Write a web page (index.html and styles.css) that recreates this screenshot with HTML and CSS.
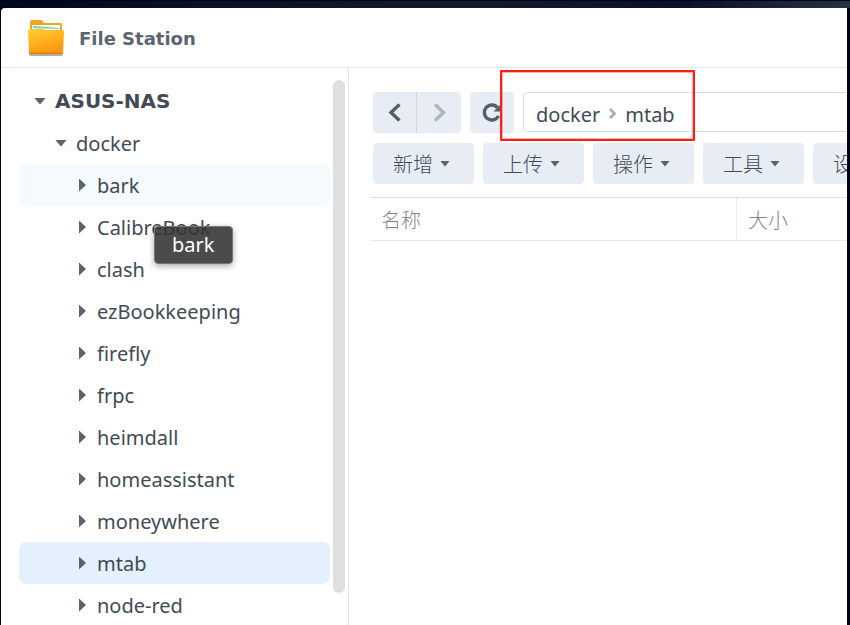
FILE: index.html
```html
<!DOCTYPE html>
<html lang="zh-CN">
<head>
    <meta charset="UTF-8">
    <meta name="viewport" content="width=device-width, initial-scale=1.0">
    <title>File Station</title>
    <link rel="stylesheet" href="styles.css">
</head>
<body>
    <div class="window">
        <header class="header">
            <svg class="logo" width="38" height="38" viewBox="0 0 38 38" aria-hidden="true">
                <defs>
                    <linearGradient id="front" x1="0" y1="0" x2="0.4" y2="1">
                        <stop offset="0" stop-color="#ffcf33"/>
                        <stop offset="1" stop-color="#ff980f"/>
                    </linearGradient>
                </defs>
                <rect x="2" y="32" width="34" height="5" rx="2" fill="#b5b0ad"/>
                <path d="M3 12V3q0-2 2-2h9q1 0 2 1l1 2h16q2 0 2 2v7z" fill="#f3a51c"/>
                <path d="M5 6h28v6H5z" fill="#fff"/>
                <path d="M6 7l26 2v3H6z" fill="#6fd3ac"/>
                <path d="M5 9l28 1v3H5z" fill="#f4fbf7"/>
                <path d="M1 12q0-2 2-2h13l3 1h16q2 0 2 2l-1 20q0 2-2 2H4q-2 0-2-2z" fill="url(#front)"/>
                <path d="M2 33q0 2 2 2h30q2 0 2-2l-1 .8H3z" fill="#d9780d"/>
            </svg>
            <h1>File Station</h1>
        </header>

        <div class="content">
            <aside class="sidebar">
                <ul class="tree">
                    <li><a class="node root" href="#"><span class="caret down"></span>ASUS-NAS</a></li>
                    <li><a class="node level-1" href="#"><span class="caret down"></span>docker</a></li>
                    <li><a class="node level-2 hover" href="#"><span class="caret right"></span>bark</a></li>
                    <li><a class="node level-2" href="#"><span class="caret right"></span>CalibreBook</a></li>
                    <li><a class="node level-2" href="#"><span class="caret right"></span>clash</a></li>
                    <li><a class="node level-2" href="#"><span class="caret right"></span>ezBookkeeping</a></li>
                    <li><a class="node level-2" href="#"><span class="caret right"></span>firefly</a></li>
                    <li><a class="node level-2" href="#"><span class="caret right"></span>frpc</a></li>
                    <li><a class="node level-2" href="#"><span class="caret right"></span>heimdall</a></li>
                    <li><a class="node level-2" href="#"><span class="caret right"></span>homeassistant</a></li>
                    <li><a class="node level-2" href="#"><span class="caret right"></span>moneywhere</a></li>
                    <li><a class="node level-2 selected" href="#"><span class="caret right"></span>mtab</a></li>
                    <li><a class="node level-2" href="#"><span class="caret right"></span>node-red</a></li>
                </ul>
                <div class="scrollbar"></div>
                <div class="tooltip" role="tooltip">bark</div>
            </aside>

            <main class="main">
                <div class="toolbar">
                    <div class="btn-group">
                        <button class="btn btn-icon" type="button" aria-label="后退">
                            <svg width="24" height="24" viewBox="0 0 24 24"><path d="M16.500 3.500L8 11.500l8.500 8" fill="none" stroke="#535f69" stroke-width="3.400"/></svg>
                        </button>
                        <button class="btn btn-icon" type="button" aria-label="前进" disabled>
                            <svg width="24" height="24" viewBox="0 0 24 24"><path d="M8 3.500l8.500 8-8.500 8" fill="none" stroke="#aeb5be" stroke-width="3.400"/></svg>
                        </button>
                    </div>
                    <button class="btn btn-icon" type="button" aria-label="刷新">
                        <svg width="24" height="24" viewBox="0 0 24 24">
                            <path d="M18.500 15a7.500 7.500 0 1 1-1-8.500" fill="none" stroke="#535f69" stroke-width="3.400"/>
                            <path d="M21 3v7.500h-7.500z" fill="#535f69"/>
                        </svg>
                    </button>
                    <nav class="path">
                        <a href="#">docker</a>
                        <svg width="9" height="12" viewBox="0 0 9 12" aria-hidden="true"><path d="M2 1l4.500 4.500L2 10" fill="none" stroke="#a3abb3" stroke-width="2.600"/></svg>
                        <a href="#">mtab</a>
                        <span class="highlight"></span>
                    </nav>
                </div>

                <div class="toolbar actions">
                    <button class="btn btn-menu" type="button">新增<span class="caret small"></span></button>
                    <button class="btn btn-menu" type="button">上传<span class="caret small"></span></button>
                    <button class="btn btn-menu" type="button">操作<span class="caret small"></span></button>
                    <button class="btn btn-menu" type="button">工具<span class="caret small"></span></button>
                    <button class="btn btn-menu" type="button">设置<span class="caret small"></span></button>
                </div>

                <table class="files">
                    <thead>
                        <tr>
                            <th class="col-name" scope="col">名称</th>
                            <th scope="col">大小</th>
                        </tr>
                    </thead>
                    <tbody></tbody>
                </table>
            </main>
        </div>
    </div>
</body>
</html>
```
FILE: styles.css
```css
* {
    margin: 0;
    padding: 0;
    box-sizing: border-box;
}

body {
    height: 100vh;
    padding: 8px 3px 0 1px;
    overflow: hidden;
    background: linear-gradient(90deg, #03071d 0%, #151a2b 55%, #0b1029 80%, #25323f 100%) 0 1px / 100% 7px no-repeat, #010417;
    font-family: "Noto Sans", "Noto Sans CJK SC", sans-serif;
    font-size: 20px;
    color: #414b55;
}

a {
    color: inherit;
    text-decoration: none;
}

.window {
    display: flex;
    flex-direction: column;
    height: 100%;
    overflow: hidden;
    background: #fff;
    border-top-left-radius: 4px;
}

.header {
    display: flex;
    flex-shrink: 0;
    align-items: center;
    gap: 14px;
    height: 60px;
    padding-left: 26px;
    border-bottom: 1px solid #e1e5e9;
}

.header h1 {
    padding-top: 2px;
    font-family: "DejaVu Sans", Verdana, sans-serif;
    font-size: 18px;
    color: #5b656f;
}

.content {
    display: flex;
    flex: 1;
    min-height: 0;
}

/* Sidebar tree */
.sidebar {
    position: relative;
    display: flex;
    flex-shrink: 0;
    gap: 3px;
    width: 348px;
    padding: 12px 3px 0 18px;
    overflow: hidden;
    border-right: 1px solid #dfe6ee;
}

.tree {
    flex: 1;
    list-style: none;
}

.node {
    display: flex;
    align-items: center;
    gap: 9px;
    height: 42px;
    border-radius: 7px;
}

.root {
    padding-left: 15px;
    font-family: "DejaVu Sans", Verdana, sans-serif;
    font-weight: bold;
}

.level-1 {
    padding-left: 36px;
}

.level-2 {
    gap: 12px;
    padding-left: 60px;
}

.hover,
.node:hover {
    background: #f5faff;
}

.selected {
    background: #e4f0fc;
}

.caret {
    flex-shrink: 0;
    background: #5a646e;
}

.caret.down {
    width: 12px;
    height: 7px;
    clip-path: polygon(0 0, 100% 0, 50% 100%);
}

.caret.right {
    width: 7px;
    height: 13px;
    margin-right: -1px;
    clip-path: polygon(0 0, 100% 50%, 0 100%);
}

.caret.small {
    width: 10px;
    height: 6px;
    clip-path: polygon(0 0, 100% 0, 50% 100%);
}

.scrollbar {
    width: 12px;
    height: 513px;
    background: #dfdfdf;
    border-radius: 6px;
}

.tooltip {
    position: absolute;
    top: 158px;
    left: 153px;
    padding: 0 18px 0 17px;
    line-height: 36px;
    color: #fff;
    background: rgba(50, 50, 50, 0.88);
    border: 1px solid #777;
    border-radius: 4px;
    box-shadow: 0 2px 6px rgba(0, 0, 0, 0.35);
}

/* Main pane */
.main {
    flex: 1;
    min-width: 0;
    padding: 24px 0 0 21px;
    overflow: hidden;
}

.toolbar {
    display: flex;
    gap: 9px;
    padding-left: 3px;
}

.actions {
    margin-top: 10px;
}

.btn-group {
    display: flex;
}

.btn {
    display: flex;
    flex-shrink: 0;
    align-items: center;
    justify-content: center;
    height: 41px;
    font: inherit;
    color: inherit;
    background: #e8edf5;
    border: none;
    border-radius: 4px;
    cursor: pointer;
}

.btn-icon {
    width: 44px;
}

.btn-group .btn:first-child {
    border-right: 1px solid #ccd8e2;
    border-radius: 4px 0 0 4px;
}

.btn-group .btn:last-child {
    border-radius: 0 4px 4px 0;
}

.btn-menu {
    gap: 7px;
    width: 101px;
    padding-right: 4px;
    font-family: "Noto Sans CJK SC", sans-serif;
    font-weight: 300;
}

.path {
    position: relative;
    display: flex;
    flex: 1;
    align-items: center;
    gap: 8px;
    height: 40px;
    padding: 4px 0 0 12px;
    border: 1px solid #d4dfe9;
    border-right: none;
    border-radius: 5px 0 0 5px;
}

.highlight {
    position: absolute;
    top: -23px;
    left: -24px;
    width: 195px;
    height: 71px;
    border: 2px solid #ff2015;
    border-radius: 1px;
    box-shadow: inset 0 0 0 1px rgba(255, 32, 21, 0.35);
}

.files {
    width: 100%;
    margin-top: 13px;
    border-collapse: separate;
    border-spacing: 0;
    border-top: 1px solid #d4dfe9;
}

.files th {
    height: 43px;
    padding-left: 11px;
    font-family: "Noto Sans CJK SC", sans-serif;
    font-weight: 300;
    text-align: left;
    color: #80868b;
    border-bottom: 1px solid #e5ebf2;
}

.files .col-name {
    width: 367px;
    border-right: 1px solid #e5ebf2;
}
```
